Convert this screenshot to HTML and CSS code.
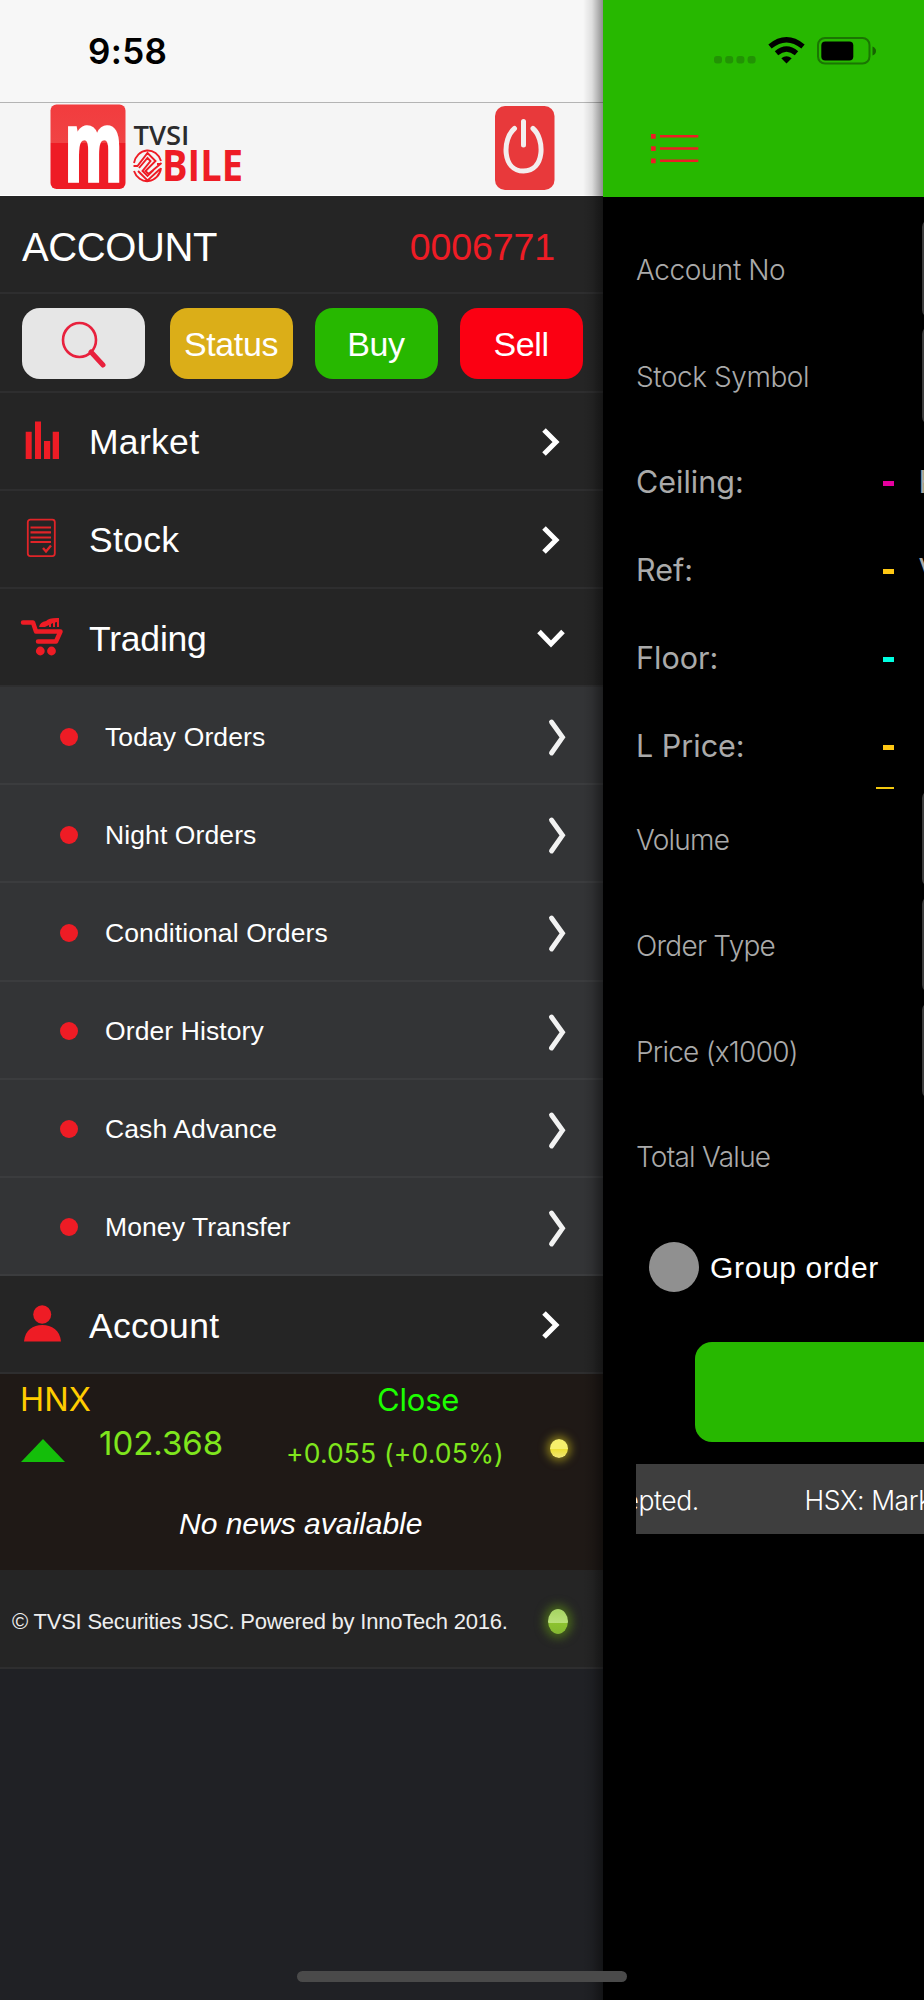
FILE: index.html
```html
<!DOCTYPE html>
<html lang="en">
<head>
<meta charset="utf-8">
<title>TVSI Mobile</title>
<link rel="stylesheet" href="styles.css">
</head>
<body>
<svg width="0" height="0" class="defs">
  <defs>
    <symbol id="next" viewBox="0 0 32 40"><path d="M9 8 21 20 9 32" fill="none" stroke="#fff" stroke-width="5"/></symbol>
    <symbol id="subnext" viewBox="0 0 32 40"><path d="M10.500 5 21.500 20.300 10.500 36" fill="none" stroke="#f2f2f2" stroke-width="4.900" stroke-linecap="round"/></symbol>
  </defs>
</svg>
<div class="screen">
  <aside class="drawer">
    <div class="status"><span class="time">9:58</span></div>
    <header class="brand">
      <svg class="logo" width="200" height="92" viewBox="0 0 200 92">
        <defs><linearGradient id="lg" x1="0" y1="0" x2="0" y2="1"><stop offset="0" stop-color="#f23c3e"/><stop offset=".45" stop-color="#f04344"/><stop offset=".46" stop-color="#ee1c25"/><stop offset="1" stop-color="#ee1c25"/></linearGradient></defs>
        <rect x="0.500" y="1.500" width="75" height="84.500" rx="6" fill="url(#lg)"/>
        <text class="logo-m" x="14.500" y="77.500" textLength="58" lengthAdjust="spacingAndGlyphs">m</text>
        <text class="logo-tvsi" x="83.500" y="42" textLength="56" lengthAdjust="spacingAndGlyphs">TVSI</text>
        <text class="logo-bile" x="112" y="78" textLength="81" lengthAdjust="spacingAndGlyphs">BILE</text>
        <g fill="none" stroke="#ee1c25" stroke-width="1.900">
          <path d="M84 60a14 15.500 0 0 1 27-2M111 65a14 15.500 0 0 1-27 3M83.500 63h4l10-13 8 8-10 10 3 3 13-11M111 61h-4M88 68l9.500 9.500L110 66M89 65l8.500-10 3 3-8 10 5 5 6-6"/>
        </g>
      </svg>
      <svg class="power" width="60" height="86" viewBox="0 0 60 86">
        <rect x="0" y="1" width="59.500" height="84" rx="10" fill="#e8393b"/>
        <path d="M19.500 23.500C7 34 7 66 28.500 66S50 34 38 23.500M28.500 16.500v23.500" fill="none" stroke="#f3eeee" stroke-width="5" stroke-linecap="round"/>
      </svg>
    </header>
    <div class="row account"><span class="ttl">ACCOUNT</span><span class="num">0006771</span></div>
    <div class="row buttons">
      <span class="btn search"><svg width="46" height="48" viewBox="0 0 46 48"><ellipse cx="18.500" cy="20" rx="16.500" ry="17" fill="none" stroke="#e8213d" stroke-width="2.600"/><path d="M30 32 42 45" stroke="#e8213d" stroke-width="5" stroke-linecap="round"/></svg></span>
      <span class="btn st">Status</span><span class="btn buy">Buy</span><span class="btn sell">Sell</span>
    </div>
    <div class="row item"><svg class="ic" viewBox="0 0 44 44"><path d="M5.700 12.700h6V40h-6zM15 2.500h6V40h-6zM24 22h6.200V40H24zM32.700 12.700H39V40h-6.300z" fill="#ee1c25"/></svg><span>Market</span><svg class="chev"><use href="#next"/></svg></div>
    <div class="row item"><svg class="ic" viewBox="0 0 44 44"><rect x="7.800" y="2.600" width="27" height="36.500" rx="2.500" fill="none" stroke="#e02428" stroke-width="1.800"/><path d="M10.500 10.500H31M10.500 15.300H31M10.500 20.500H31M10.500 25H31" stroke="#e02428" stroke-width="2.200"/><path d="M23 31l3 3.500 5-6" fill="none" stroke="#e02428" stroke-width="2.400"/></svg><span>Stock</span><svg class="chev"><use href="#next"/></svg></div>
    <div class="row item trading"><svg class="ic" viewBox="0 0 44 44"><g fill="none" stroke="#ee1c25" stroke-width="4.500" stroke-linecap="round" stroke-linejoin="round"><path d="M3 6.500h10l3 9h24.500L36 25.500H18"/></g><path d="M19 11q1-5 7-6 3-3.500 13-3v9h-2V6l-2 .5V11h-2V7l-2 1v3h-2V9l-4 2z" fill="#ee1c25"/><circle cx="20.300" cy="35" r="4.400" fill="#ee1c25"/><circle cx="31.500" cy="35" r="4.400" fill="#ee1c25"/></svg><span>Trading</span><svg class="chev" viewBox="0 0 32 40"><path d="M4 13.500 16 26 28 13.500" fill="none" stroke="#fff" stroke-width="5"/></svg></div>
    <div class="row sub"><i></i><span>Today Orders</span><svg class="chev"><use href="#subnext"/></svg></div>
    <div class="row sub"><i></i><span>Night Orders</span><svg class="chev"><use href="#subnext"/></svg></div>
    <div class="row sub"><i></i><span>Conditional Orders</span><svg class="chev"><use href="#subnext"/></svg></div>
    <div class="row sub"><i></i><span>Order History</span><svg class="chev"><use href="#subnext"/></svg></div>
    <div class="row sub"><i></i><span>Cash Advance</span><svg class="chev"><use href="#subnext"/></svg></div>
    <div class="row sub"><i></i><span>Money Transfer</span><svg class="chev"><use href="#subnext"/></svg></div>
    <div class="row item"><svg class="ic" viewBox="0 0 44 44"><ellipse cx="22.200" cy="11.500" rx="9" ry="9.300" fill="#ee1c25"/><path d="M4 38.500C5 27 13 22 22.300 22S40 27 41 38.500z" fill="#ee1c25"/></svg><span>Account</span><svg class="chev"><use href="#next"/></svg></div>
    <section class="market">
      <div class="names"><span class="hnx">HNX</span><span class="close">Close</span></div>
      <div class="quote"><svg width="44" height="23" viewBox="0 0 44 23"><path d="M0 23 22 0l22 23z" fill="#14be0a"/></svg><span class="idx">102.368</span><span class="chg">+0.055 (+0.05%)</span><b class="led yellow"></b></div>
      <div class="news">No news available</div>
    </section>
    <footer class="row foot"><span>© TVSI Securities JSC. Powered by InnoTech 2016.</span><b class="led green"></b></footer>
    <div class="shade"></div>
  </aside>
  <main class="order">
    <header class="bar">
      <div class="sys">
        <svg class="dots" viewBox="0 0 42 8"><g fill="#229304"><rect width="8" height="7.500" rx="3"/><rect x="11.200" width="8" height="7.500" rx="3"/><rect x="22.400" width="8" height="7.500" rx="3"/><rect x="33.600" width="8" height="7.500" rx="3"/></g></svg>
        <svg width="37" height="27" viewBox="0 0 37 27"><g fill="none" stroke="#000" stroke-width="5.200"><path d="M2 9.500Q18.500-4 35 9.500"/><path d="M8.500 16.300Q18.500 7.700 28.500 16.300"/></g><path d="M18.500 26.500 13.300 21.300q5.200-4.300 10.400 0z"/></svg>
        <svg width="60" height="28" viewBox="0 0 60 28"><rect x="1" y="1" width="51.500" height="25.500" rx="7" fill="none" stroke="#1b7503" stroke-width="2"/><rect x="4.300" y="4.500" width="32" height="19" rx="4"/><path d="M55.500 9.500q3.500 1.500 3.500 4.500t-3.500 4.500z" fill="#176302"/></svg>
      </div>
      <svg class="menu" width="48" height="30" viewBox="0 0 48 30"><g fill="#ee1c25"><path d="M0 0h4.700v4.700H0zM0 12.200h4.700v4.700H0zM0 24.500h4.700v4.700H0z"/><path d="M9 1.100h38.300v2.500H9zM9 13.300h38.300v2.500H9zM9 25.500h38.300V28H9z"/></g></svg>
    </header>
    <div class="fields top">
      <div class="field"><label>Account No</label><u></u></div>
      <div class="field"><label>Stock Symbol</label><u></u></div>
    </div>
    <div class="prices">
      <div class="price"><span>Ceiling:</span><b class="dash pink"></b><em>High:</em></div>
      <div class="price"><span>Ref:</span><b class="dash"></b><em>Vol:</em></div>
      <div class="price"><span>Floor:</span><b class="dash cyan"></b></div>
      <div class="price"><span>L Price:</span><b class="dash"></b><s></s></div>
    </div>
    <div class="fields low">
      <div class="field"><label>Volume</label><u></u></div>
      <div class="field"><label>Order Type</label><u></u></div>
      <div class="field"><label>Price (x1000)</label><u></u></div>
      <div class="field"><label>Total Value</label></div>
    </div>
    <div class="group"><i></i><span>Group order</span></div>
    <div class="submit"></div>
    <div class="ticker"><span class="t1">epted.</span><span class="t2">HSX: Market</span></div>
  </main>
  <div class="home"></div>
</div>
</body>
</html>
```
FILE: styles.css
```css
* { box-sizing: border-box; }
body { margin: 0; background: #000; font-family: "Liberation Sans", Arial, sans-serif; }
.defs { position: absolute; }
.screen { position: relative; display: flex; width: 924px; height: 2000px; overflow: hidden; white-space: nowrap; }
.drawer { position: relative; flex: none; width: 603px; background: #202125; color: #fff; }
.shade { position: absolute; top: 0; right: 0; width: 20px; height: 100%; background: linear-gradient(to right, rgba(0,0,0,0), rgba(0,0,0,.1) 45%, rgba(0,0,0,.42)); }
.status { height: 103px; padding: 30px 0 0 88px; background: #f7f7f7; border-bottom: 1px solid #b4b4b4; color: #000; }
.time { font: 600 35px/42px Inter, sans-serif; letter-spacing: .3px; }
.brand { display: flex; justify-content: space-between; height: 93.300px; padding: 0 48px 0 50px; background: #f5f5f5; border-bottom: 1.500px solid #fff; }
.logo, .power { display: block; }
.power { margin-top: 1.500px; }
.logo-m { font: 700 97px "Open Sans", sans-serif; fill: #fff; stroke: #fff; stroke-width: 3.500px; }
.logo-tvsi { font: 600 27px "Open Sans", sans-serif; fill: #2b2b2d; }
.logo-bile { font: 700 43px "Open Sans", sans-serif; fill: #ee1c25; }
.row { display: flex; align-items: center; height: 98.170px; background: #252525; border-bottom: 2px solid #2e2e2f; }
.account { justify-content: space-between; padding: 6px 48px 0 22px; font-size: 40px; }
.ttl { letter-spacing: -.4px; }
.num { font-size: 37.500px; letter-spacing: -.1px; color: #ee1c25; }
.buttons { gap: 22px; padding: 2px 0 0 22px; }
.btn { display: flex; align-items: center; justify-content: center; width: 123px; height: 71.500px; border-radius: 18px; padding-top: 2px; font-size: 34px; letter-spacing: -.4px; }
.search { background: #e6e6e6; margin-right: 2.500px; padding: 0; }
.st { background: #dbae18; }
.buy { background: #27b800; }
.sell { background: #fb0012; }
.item { padding-left: 20px; font-size: 35.500px; letter-spacing: .3px; }
.item.trading { letter-spacing: -.2px; }
.ic { width: 44px; height: 44px; margin: 1px 25px 0 0; }
.item span, .sub span { flex: 1; padding-top: 4px; }
.item .chev { margin: 2px 36px 0 0; }
.chev { width: 32px; height: 40px; }
.sub { padding-left: 60px; background: #333436; border-color: #3b3c3e; font-size: 26.500px; letter-spacing: .1px; }
.sub i { width: 18px; height: 18px; margin: 3px 27px 0 0; border-radius: 50%; background: #ee1c25; }
.sub .chev { margin: 4px 30px 0 0; }
.market { height: 196.300px; padding: 4px 0 0; background: #1f1916; font-family: Inter, sans-serif; }
.names { display: flex; height: 42px; line-height: 43px; padding-left: 20px; }
.hnx { width: 357px; font-size: 32.500px; color: #fc0; }
.close { font-size: 31px; letter-spacing: -.2px; color: #1dff00; }
.quote { display: flex; height: 54px; align-items: center; padding-left: 20.500px; }
.quote svg { margin-top: 7px; }
.idx { width: 187px; margin-left: 34.500px; margin-top: -8px; font-size: 33px; color: #7fe61d; }
.chg { width: 222px; margin-top: 11px; font-size: 26.500px; letter-spacing: .15px; color: #7fe61d; }
.led { display: block; flex: none; border-radius: 50%; }
.yellow { width: 18px; height: 19px; margin: 2px 0 0 42px; background: linear-gradient(#f6ef6c 50%, #ecdf32 52%, #f2e878); box-shadow: 0 0 8px 3px #857919; }
.green { width: 20px; height: 25px; margin: 5px 35px 0 0; background: linear-gradient(#a9d666 10%, #b9e078 55%, #8cc22e 58%, #84b832); box-shadow: 0 0 10px 4px #47661b; }
.news { margin-top: 24.500px; padding-left: 179px; font: italic 30px/50px "Liberation Sans", sans-serif; }
.foot { justify-content: space-between; padding-left: 12px; font-size: 22px; letter-spacing: -.22px; color: #eee; }
.foot span { padding-top: 6px; }
.order { flex: 1; min-width: 0; overflow: hidden; background: #000; }
.bar { height: 196.500px; padding: 36.500px 0 0 48px; background: #27b800; }
.sys { display: flex; align-items: flex-start; padding-left: 63px; }
.sys .dots { width: 42px; height: 8px; margin: 19.500px 12px 0 0; }
.sys svg + svg + svg { margin-left: 12px; }
.menu { display: block; margin-top: 69.500px; }
.fields { display: flex; flex-direction: column; gap: 10px; padding: 23.500px 0 13px 33px; }
.field { display: flex; align-items: center; height: 97px; font: 300 28px Inter, sans-serif; letter-spacing: -.45px; color: #aaa; }
.field label { width: 286px; flex: none; padding-top: 3px; }
.field u { flex: none; align-self: stretch; width: 40px; border-radius: 7px; background: #3b3b3b; }
.price { position: relative; display: flex; align-items: center; height: 88.100px; padding-left: 33px; font: 400 30.500px Inter, sans-serif; color: #aaa; }
.price span { flex: none; width: 246.500px; }
.dash { flex: none; width: 11px; height: 5px; margin-top: 4px; background: #ffc814; }
.pink { background: #e6009f; }
.cyan { background: #00ffe0; }
.price em { flex: none; font-style: normal; margin-left: 25px; }
.price s { position: absolute; left: 273px; bottom: 0; width: 18px; height: 2.500px; background: #f2c80f; }
.low { gap: 10.600px; padding: 2px 0 0 33px; }
.low .field { height: 95px; letter-spacing: -.75px; }
.group { display: flex; align-items: center; height: 138.500px; padding: 0 0 11.500px 46px; font-size: 30px; letter-spacing: .65px; color: #fff; }
.group i { width: 50px; height: 50px; margin-right: 11px; border-radius: 50%; background: #909090; }
.group span { padding-top: 3px; }
.submit { height: 100.500px; margin-left: 92px; border-radius: 17px 0 0 17px; background: #27b800; }
.ticker { display: flex; align-items: center; height: 70px; margin: 22px 0 0 33px; padding-top: 2px; overflow: hidden; background: #3e3e3e; color: #fff; font: 300 26.500px Inter, sans-serif; letter-spacing: -.4px; }
.t1 { flex: none; width: 181px; margin-left: -12.500px; }
.t2 { flex: none; }
.home { position: absolute; left: 297px; top: 1971px; width: 330px; height: 11px; border-radius: 6px; background: #4a4a4a; }
```
